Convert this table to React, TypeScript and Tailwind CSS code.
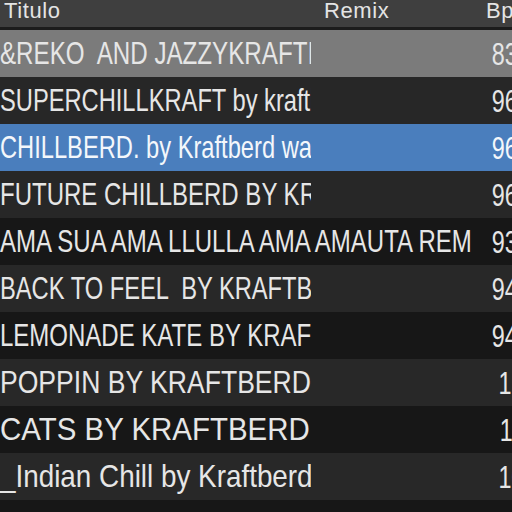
import React from 'react';

type Track = {
  title: string;
  bpm: string;
  sx: string;
  bg: string;
  wide?: boolean;
  selected?: boolean;
};

const tracks: Track[] = [
  { title: '&REKO  AND JAZZYKRAFTI', bpm: '83.0', sx: 'scale-x-[0.755]', bg: 'bg-[#7b7b7b]' },
  { title: 'SUPERCHILLKRAFT by kraftberd', bpm: '96.0', sx: 'scale-x-[0.74]', bg: 'bg-[#272727]' },
  { title: 'CHILLBERD. by Kraftberd wav', bpm: '96.0', sx: 'scale-x-[0.74]', bg: 'bg-[#4a7ebd]', selected: true },
  { title: 'FUTURE CHILLBERD BY KRAFTBERD', bpm: '96.0', sx: 'scale-x-[0.75]', bg: 'bg-[#272727]' },
  { title: 'AMA SUA AMA LLULLA AMA AMAUTA REMIX', bpm: '93.0', sx: 'scale-x-[0.75]', bg: 'bg-[#171717]', wide: true },
  { title: 'BACK TO FEEL  BY KRAFTBERD', bpm: '94.0', sx: 'scale-x-[0.74]', bg: 'bg-[#282828]' },
  { title: 'LEMONADE KATE BY KRAFTBERD', bpm: '94.0', sx: 'scale-x-[0.75]', bg: 'bg-[#171717]' },
  { title: 'POPPIN BY KRAFTBERD', bpm: '120', sx: 'scale-x-[0.83]', bg: 'bg-[#282828]' },
  { title: 'CATS BY KRAFTBERD', bpm: '110', sx: 'scale-x-[0.92]', bg: 'bg-[#171717]' },
  { title: '_Indian Chill by Kraftberd', bpm: '100', sx: 'scale-x-[0.87]', bg: 'bg-[#282828]' },
  { title: '', bpm: '', sx: 'scale-x-[0.73]', bg: 'bg-[#171717]' },
];

const Row = ({ t }: { t: Track }) => {
  const color = t.selected ? 'text-[#f4f7fb]' : 'text-[#e6e6e6]';
  return (
    <div className={`flex h-[47px] shrink-0 items-center ${t.bg}`}>
      <div className={`${t.wide ? 'w-[473px]' : 'w-[311px]'} shrink-0 overflow-hidden`}>
        <span className={`inline-block origin-left whitespace-pre text-[32px] leading-none ${t.sx} ${color}`}>
          {t.title}
        </span>
      </div>
      {!t.wide && <div className="w-[162px] shrink-0" />}
      <div className="ml-[2px] flex w-[62px] shrink-0 justify-end">
        <span className={`inline-block origin-right scale-x-[0.73] whitespace-pre text-[32px] leading-none ${color}`}>
          {t.bpm}
        </span>
      </div>
    </div>
  );
};

export default function App() {
  return (
    <div
      className="flex h-[512px] w-[512px] flex-col overflow-hidden bg-[#171717]"
      style={{ fontFamily: '"Liberation Sans", Arial, sans-serif' }}
    >
      {/* header */}
      <div className="flex h-[27px] shrink-0 items-start bg-[#3f3f3f] text-[22px] leading-none tracking-[0.6px] text-[#e4e4e4]">
        <div className="w-[311px] shrink-0 pl-[4px]">Titulo</div>
        <div className="w-[164px] shrink-0 pl-[13px]">Remix</div>
        <div className="w-[62px] shrink-0 pl-[11px]">Bpm</div>
      </div>
      <div className="h-[3px] shrink-0 bg-[#1c1c1c]" />
      {tracks.map((t, i) => (
        <Row key={i} t={t} />
      ))}
    </div>
  );
}
